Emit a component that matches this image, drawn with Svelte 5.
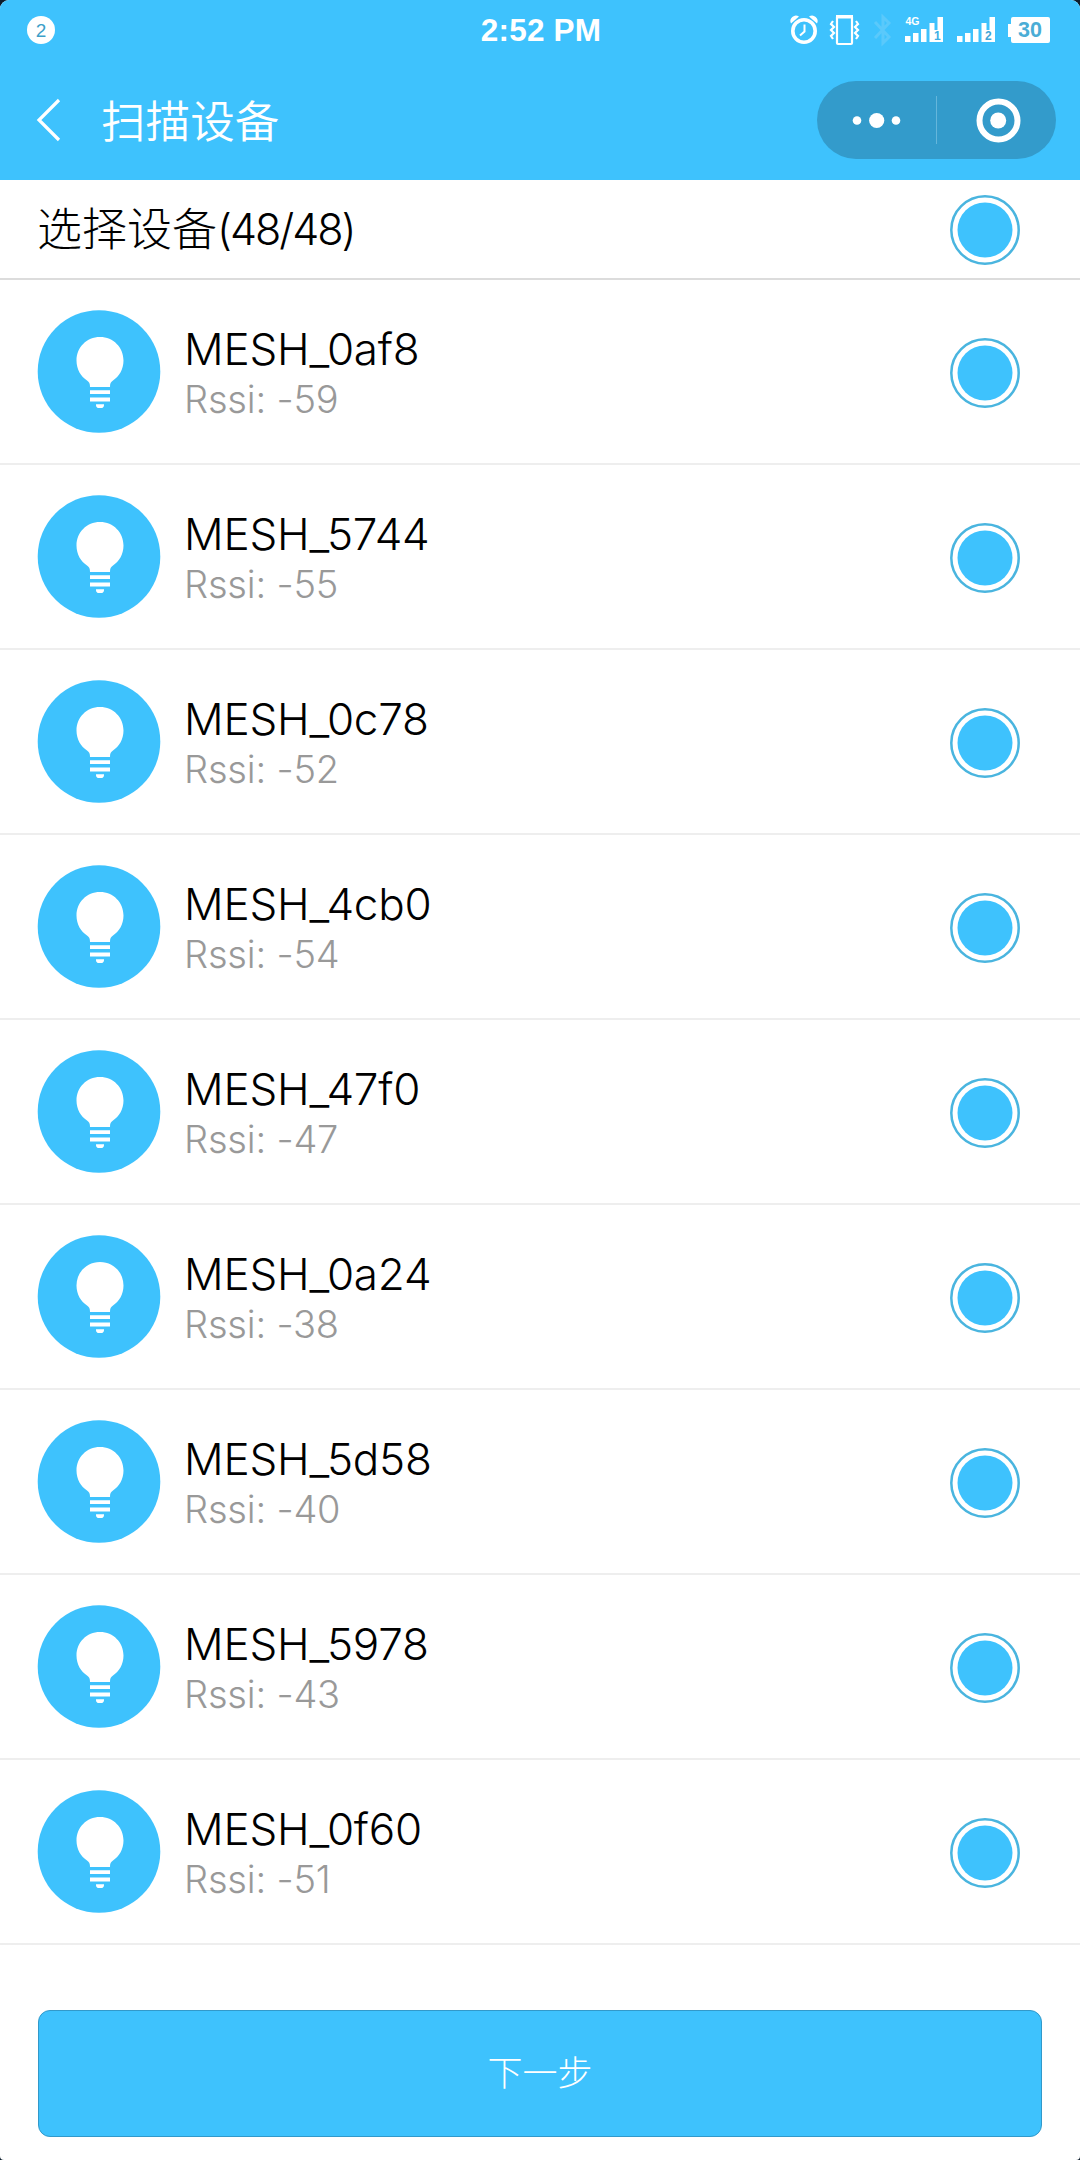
<script>
  const devices = [
    { name: 'MESH_0af8', rssi: -59 },
    { name: 'MESH_5744', rssi: -55 },
    { name: 'MESH_0c78', rssi: -52 },
    { name: 'MESH_4cb0', rssi: -54 },
    { name: 'MESH_47f0', rssi: -47 },
    { name: 'MESH_0a24', rssi: -38 },
    { name: 'MESH_5d58', rssi: -40 },
    { name: 'MESH_5978', rssi: -43 },
    { name: 'MESH_0f60', rssi: -51 }
  ];
</script>

{#snippet radio()}
  <svg class="radio" width="70" height="70" viewBox="0 0 70 70">
    <circle cx="35" cy="35" r="33.700" fill="none" stroke="#4ab5df" stroke-width="2.500" />
    <circle cx="35" cy="35" r="27.500" fill="#3ec2fd" />
  </svg>
{/snippet}

<div class="screen">
  <header>
    <div class="status">
      <span class="count">2</span>
      <span class="time">2:52 PM</span>
      <svg class="icons" width="270" height="40" viewBox="785 10 270 40" fill="#fff">
        <!-- alarm clock -->
        <circle cx="804" cy="31" r="11.200" fill="none" stroke="#fff" stroke-width="3.600" />
        <path d="M804.500 24.500v7l-4.500 4" fill="none" stroke="#fff" stroke-width="2" />
        <path d="M791 23.500a5.500 5.500 0 0 1 8-7zM817 23.500a5.500 5.500 0 0 0-8-7z" />
        <!-- vibrating phone -->
        <rect x="837" y="16" width="15" height="28" rx="1" fill="none" stroke="#fff" stroke-width="2.200" />
        <path d="M836 15h17v3.500h-17z" />
        <path d="M833 21l-2 3 3 3-3 3 3 3-3 3 2 3M856 21l2 3-3 3 3 3-3 3 3 3-2 3" fill="none" stroke="#fff" stroke-width="2.200" />
        <!-- bluetooth, idle -->
        <path d="M875 22l14 15-6 6V17l6 6-14 15" fill="none" stroke="#5ac9fb" stroke-width="3" />
        <!-- SIM signals -->
        <path d="M905 36h5.500v6H905zM913 33h5.500v9H913zM921 29h5.500v13H921zM929.500 23h5v19h-5zM937.500 17h5.500v25h-5.500z" />
        <path d="M957 36h5.500v6H957zM965 33h5.500v9H965zM973 29h5.500v13H973zM981.500 23h5v19h-5zM989.500 17h5.500v25h-5.500z" />
        <path d="M933 30h7v12h-7zM985 30h7v12h-7z" />
        <text x="905.500" y="25" font-size="10.500" font-weight="700">4G</text>
        <text x="934" y="40" font-size="12" font-weight="700" fill="#3eafe5">1</text>
        <text x="985" y="40" font-size="12" font-weight="700" fill="#3ea5d8">2</text>
        <!-- battery -->
        <path d="M1013 17h35a2 2 0 0 1 2 2v22a2 2 0 0 1-2 2h-35a2 2 0 0 1-2-2v-4h-3V24h3v-5a2 2 0 0 1 2-2z" />
        <text x="1018" y="37" font-size="21.500" font-weight="700" fill="#4aadd6">30</text>
      </svg>
    </div>
    <div class="nav">
      <svg class="back" width="26" height="44" viewBox="0 0 26 44">
        <path d="M23 2L3 22l20 20" fill="none" stroke="#fff" stroke-width="3.200" />
      </svg>
      <h1>扫描设备</h1>
      <div class="capsule">
        <svg width="239" height="78" viewBox="0 0 239 78" fill="#fff">
          <circle cx="40" cy="39.500" r="4.300" />
          <circle cx="59.700" cy="39.500" r="7.600" />
          <circle cx="79" cy="39.500" r="4.300" />
          <path d="M119 15h1v48h-1z" fill="#65b6db" />
          <circle cx="181.500" cy="39.500" r="19" fill="none" stroke="#fff" stroke-width="6" />
          <circle cx="181.200" cy="39.500" r="8" />
        </svg>
      </div>
    </div>
  </header>

  <div class="select-all">
    <p><span>选择设备</span><span class="total">(48/48)</span></p>
    {@render radio()}
  </div>

  <ul>
    {#each devices as device (device.name)}
      <li>
        <svg class="bulb" width="124" height="123" viewBox="0 0 124 123">
          <circle cx="62" cy="61.500" r="61.300" fill="#3ec2fd" />
          <path d="M63 27c13.500 0 23.500 10.500 23.500 23.500 0 9-4.500 16-10.500 20-2.300 1.500-3 3-3 6.500H53c0-3.500-.7-5-3-6.500-6-4-10.500-11-10.500-20C39.500 37.500 49.500 27 63 27z" fill="#fff" />
          <path d="M53 80.300h20v3.700H53zM53 87.500h20v4H53zM59 94.200h8v1a3 3 0 0 1-3 2.800h-2a3 3 0 0 1-3-2.800z" fill="#fff" />
        </svg>
        <div class="info">
          <span class="name">{device.name}</span>
          <span class="rssi">Rssi: {device.rssi}</span>
        </div>
        {@render radio()}
      </li>
    {/each}
  </ul>

  <button>下一步</button>
</div>

<style>
  :global(body) {
    background: #0c1c2c;
  }
  .screen {
    width: 1080px;
    height: 2160px;
    box-sizing: border-box;
    overflow: hidden;
    background: #fff;
    border-radius: 9px 9px 4px 4px;
    font-family: Inter, 'Noto Sans CJK SC', sans-serif;
    font-weight: 300;
    color: #000;
  }
  header {
    height: 180px;
    background: #3ec2fd;
    color: #fff;
  }
  .status {
    display: grid;
    grid-template-columns: 1fr auto 1fr;
    align-items: center;
    height: 60px;
    padding: 0 25px 0 27px;
    font-family: 'Liberation Sans', sans-serif;
  }
  .count {
    width: 28px;
    height: 28px;
    border-radius: 50%;
    background: #fff;
    color: #3d9fc9;
    font-size: 19px;
    line-height: 29px;
    text-align: center;
  }
  .time {
    font-size: 31.5px;
    font-weight: 700;
    letter-spacing: 0.2px;
  }
  .icons {
    justify-self: end;
  }
  .nav {
    display: flex;
    align-items: center;
    height: 120px;
    padding: 0 24px 0 36px;
  }
  h1 {
    margin: 0 auto 0 39px;
    padding-bottom: 2px;
    font-family: 'Noto Sans CJK SC', sans-serif;
    font-size: 44.6px;
    line-height: 60px;
    font-weight: 350;
  }
  .capsule {
    height: 78px;
    border-radius: 39px;
    background: #339bcb;
  }
  .capsule svg {
    display: block;
  }
  .select-all {
    display: flex;
    align-items: center;
    justify-content: space-between;
    height: 100px;
    box-sizing: border-box;
    border-bottom: 2px solid #dcdcdc;
    padding: 2px 60px 0 37px;
  }
  .select-all :global(.radio) {
    margin-top: 0;
  }
  p {
    margin: 0;
    display: flex;
    align-items: center;
    font-size: 45px;
    line-height: 60px;
  }
  .total {
    margin-top: -2px;
    font-size: 43px;
    letter-spacing: -2px;
  }
  .radio {
    display: block;
    margin-top: 2px;
  }
  ul {
    list-style: none;
    margin: 0;
    padding: 0;
  }
  li {
    display: flex;
    align-items: center;
    height: 185px;
    box-sizing: border-box;
    border-bottom: 2px solid #eee;
    padding: 0 60px 0 37px;
  }
  .info {
    display: flex;
    flex-direction: column;
    flex: 1;
    margin-left: 23px;
    padding-top: 2px;
  }
  .name {
    font-size: 44px;
    line-height: 52px;
    letter-spacing: -0.2px;
  }
  .rssi {
    font-size: 38px;
    line-height: 48px;
    letter-spacing: -0.2px;
    color: #999;
  }
  button {
    display: block;
    width: 1004px;
    height: 127px;
    margin: 65px 38px 0;
    border: 1px solid #3299ca;
    border-radius: 12px;
    padding: 0 0 7px;
    background: #3ec2fd;
    color: #fff;
    font: 300 35px 'Noto Sans CJK SC', sans-serif;
  }
</style>
